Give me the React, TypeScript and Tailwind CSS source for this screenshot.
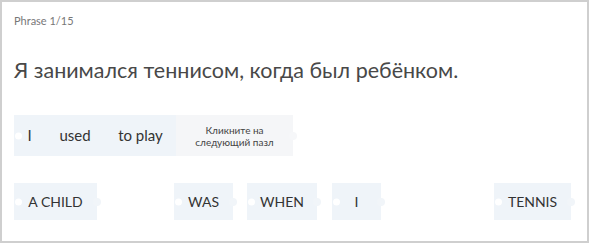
import React from 'react';

type Piece = { label: string; width: number; gap: number };

const pool: Piece[] = [
  { label: 'A CHILD', width: 83, gap: 0 },
  { label: 'WAS', width: 59, gap: 77 },
  { label: 'WHEN', width: 70, gap: 14 },
  { label: 'I', width: 49, gap: 15 },
  { label: 'TENNIS', width: 77, gap: 113 },
];

const answer = [
  { label: 'I', width: 31 },
  { label: 'used', width: 60 },
  { label: 'to play', width: 71 },
];

function Notch() {
  return <span className="absolute left-[1px] top-1/2 -translate-y-1/2 w-[7px] h-[7px] rounded-full bg-white" />;
}

function Knob({ color }: { color: string }) {
  return <span className={`absolute -right-[4px] top-1/2 -translate-y-1/2 w-[8px] h-[8px] rounded-full ${color}`} />;
}

export default function App() {
  return (
    <div
      className="w-[589px] h-[243px] bg-white border-2 border-[#cfcfcf] px-3 pt-[12px]"
      style={{ fontFamily: 'Lato, "Noto Sans", sans-serif' }}
    >
      <div className="text-[11px] leading-[14px] text-[#777]">Phrase 1/15</div>

      <h1 className="mt-[28px] text-[21.5px] leading-[28px] text-[#484848] font-normal">
        Я занимался теннисом, когда был ребёнком.
      </h1>

      <div className="mt-[31px] flex h-[41px]">
        {answer.map((p, i) => (
          <div
            key={p.label}
            className="relative flex items-center justify-center bg-[#eff4f9] text-[15px] text-[#333]"
            style={{ width: p.width }}
          >
            {i === 0 && <Notch />}
            <span className="relative">{p.label}</span>
          </div>
        ))}
        <div className="relative w-[117px] flex items-center justify-center bg-[#f5f6f8] text-[10px] leading-[12px] text-[#444] text-center">
          <Knob color="bg-[#f6f7f9]" />
          Кликните на
          <br />
          следующий пазл
        </div>
      </div>

      <div className="mt-[27px] flex h-[37px]">
        {pool.map((p) => (
          <div
            key={p.label}
            className="relative flex items-center justify-center bg-[#eff4f9] text-[14px] text-[#333]"
            style={{ width: p.width, marginLeft: p.gap }}
          >
            <Notch />
            <Knob color="bg-[#f1f5f9]" />
            <span className="relative">{p.label}</span>
          </div>
        ))}
      </div>
    </div>
  );
}
